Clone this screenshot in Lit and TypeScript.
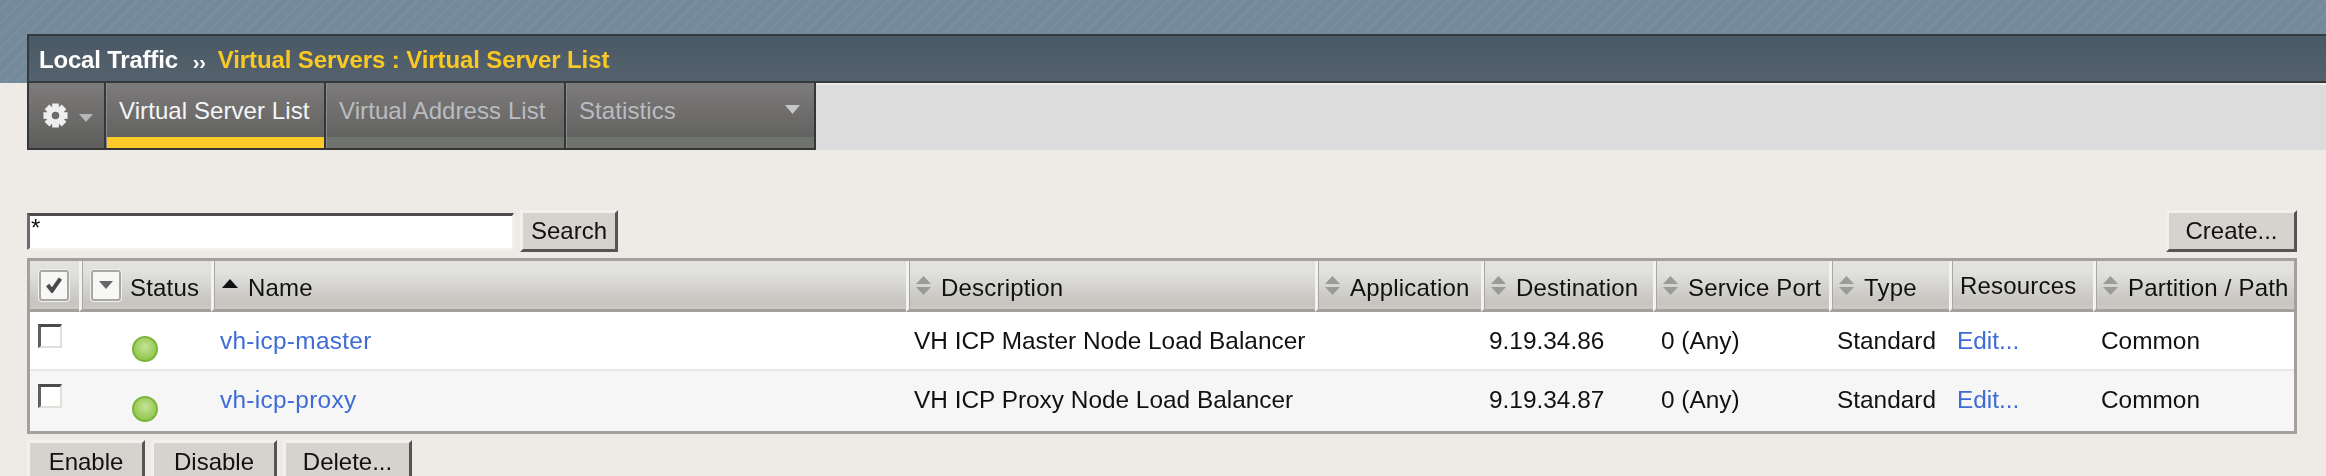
import { LitElement, html, css, svg } from "lit";
import { customElement } from "lit/decorators.js";

const sortBoth = svg`<svg class="sort" width="17" height="19" viewBox="0 0 17 19"><path d="M8.5 0 L16 8 H1 Z M1 11 H16 L8.5 19 Z" fill="#9a9a98"/></svg>`;
const sortUp = svg`<svg class="sort up" width="16" height="9" viewBox="0 0 16 9"><path d="M8 0 L16 9 H0 Z" fill="#111"/></svg>`;

const gearPath = (() => {
  let d = "";
  const cx = 12.5, cy = 12.5, n = 8;
  for (let i = 0; i < n; i++) {
    const a = (i * 2 * Math.PI) / n;
    const w = 0.27;
    const p = (r: number, t: number) => `${(cx + r * Math.cos(t)).toFixed(2)} ${(cy + r * Math.sin(t)).toFixed(2)}`;
    d += `${i === 0 ? "M" : "L"}${p(8.6, a - w * 1.5)} L${p(12.5, a - w)} L${p(12.5, a + w)} L${p(8.6, a + w * 1.5)} `;
  }
  return d + "Z";
})();

type Row = { name: string; desc: string; dest: string };
const rows: Row[] = [
  { name: "vh-icp-master", desc: "VH ICP Master Node Load Balancer", dest: "9.19.34.86" },
  { name: "vh-icp-proxy", desc: "VH ICP Proxy Node Load Balancer", dest: "9.19.34.87" },
];

@customElement("app-root")
export class AppRoot extends LitElement {
  static styles = css`
    :host {
      display: block;
      width: 2326px;
      height: 476px;
      overflow: hidden;
      background: #eeebe6;
      font-family: "Liberation Sans", Arial, sans-serif;
      font-size: 24px;
      color: #111;
    }
    .page { filter: blur(0.45px); }
    .hatch {
      height: 83px;
      padding: 34px 0 0 27px;
      box-sizing: border-box;
      background: repeating-linear-gradient(135deg, #74899a 0 6px, #798d9e 6px 9px);
    }
    .crumb {
      height: 49px;
      box-sizing: border-box;
      border-top: 2px solid #333a40;
      border-left: 2px solid #333a40;
      border-bottom: 2px solid #333a40;
      background: linear-gradient(#4a5966, #55626d);
      display: flex;
      align-items: center;
      padding: 2px 0 0 10px;
      font-weight: bold;
      letter-spacing: -0.2px;
      color: #fff;
    }
    .sep { margin: 5px 12px 0 15px; font-size: 20px; }
    .crumb .cur { color: #f9c825; letter-spacing: -0.1px; }
    .navrow { display: flex; height: 67px; padding-left: 27px; }
    .nav {
      display: flex;
      width: 789px;
      height: 67px;
      box-sizing: border-box;
      border: 2px solid #33373a;
      border-top: 0;
      background: #33373a;
      gap: 2px;
    }
    .band { flex: 1; background: #dcdcdc; margin-top: 2px; }
    .tab {
      position: relative;
      box-sizing: border-box;
      background: linear-gradient(#7d7b7b, #5d5e5b);
      color: #b9bcc0;
      padding: 13px 0 0 12px;
      height: 65px;
      border-left: 1px solid #8b8b8b;
      line-height: 30px;
      letter-spacing: 0.08px;
    }
    .tab::after {
      content: "";
      position: absolute;
      left: 0;
      right: 0;
      bottom: 0;
      height: 11px;
      background: #70726d;
    }
    .tab.active { color: #f4f6f8; }
    .tab.active::after { background: #fccb2a; }
    .tab.gear {
      width: 75px;
      padding: 20px 0 0 14px;
      border-left: 0;
      display: flex;
      gap: 11px;
    }
    .tab.gear::after { display: none; }
    .tab.gear .car { margin-top: 11px; }
    .t1 { width: 218px; }
    .t2 { width: 238px; }
    .t3 { flex: 1; display: flex; justify-content: space-between; padding-right: 14px; }
    .t3 svg { margin-top: 9px; }
    .body { padding: 60px 29px 0 27px; }
    .search { display: flex; align-items: flex-start; height: 42px; margin-bottom: 6px; }
    .input {
      width: 487px;
      height: 37px;
      margin-top: 3px;
      box-sizing: border-box;
      border: 2px solid #f3f1ed;
      border-top: 3px solid #4c4c4c;
      border-left: 3px solid #6a6a6a;
      background: #fff;
      line-height: 24px;
      padding-left: 1px;
    }
    .btn {
      box-sizing: border-box;
      height: 42px;
      background: #d6d3ce;
      border: 3px solid #f2f0ec;
      border-right-color: #555;
      border-bottom-color: #555;
      display: flex;
      align-items: center;
      justify-content: center;
      color: #111;
    }
    .b-search { width: 98px; margin-left: 6px; }
    .b-create { width: 131px; margin-left: auto; }
    .table {
      display: grid;
      grid-template-columns: 49px 132px 695px 409px 166px 172px 176px 120px 144px 201px;
      grid-template-rows: 51px 59px 60px;
      border: 3px solid #a3a19e;
      box-sizing: border-box;
      background: #fff;
    }
    .th {
      box-sizing: border-box;
      border-left: 3px solid #f2f2f0;
      box-shadow: inset 1px 0 0 #a9a7a3;
      border-bottom: 3px solid #a3a19e;
      background: linear-gradient(#e2e2e0 0, #e0e0de 25%, #c8c5c1 85%, #cdcac5);
      display: flex;
      align-items: center;
      padding: 5px 0 0 6px;
      white-space: nowrap;
      letter-spacing: 0.2px;
    }
    .th:first-child { border-left: 0; box-shadow: none; padding-left: 9px; }
    .sort { margin-right: 9px; flex: none; margin-top: -5px; }
    .sort.up { margin-right: 10px; margin-top: -9px; margin-left: 2px; }
    .th.res { padding-bottom: 3px; padding-left: 8px; }
    .box {
      width: 30px;
      height: 31px;
      margin-top: -5px;
      box-sizing: border-box;
      border: 2px solid #a8a8a6;
      border-radius: 3px;
      background: #f7f7f6;
      box-shadow: 0 0 0 1px #f0f0ee;
      display: flex;
      align-items: center;
      justify-content: center;
      flex: none;
    }
    .th.status { padding-left: 9px; }
    .box.dd { margin-right: 9px; }
    .td {
      display: flex;
      align-items: center;
      padding-left: 8px;
      white-space: nowrap;
      background: #fff;
      box-sizing: border-box;
      border-bottom: 2px solid #e8e8e6;
      font-size: 24.4px;
    }
    .alt .td { background: #f6f6f6; border-bottom: 0; padding-bottom: 2px; }
    .row { display: contents; }
    .cb {
      width: 24px;
      height: 24px;
      box-sizing: border-box;
      border: 2px solid #e2dfda;
      border-top: 3px solid #4b4b4b;
      border-left: 3px solid #5f5f5f;
      background: #fff;
    }
    .td.cbc { align-items: flex-start; padding: 12px 0 0 8px; }
    .alt .td.cbc { padding-top: 13px; }
    .dot {
      width: 26px;
      height: 26px;
      border-radius: 50%;
      box-sizing: border-box;
      border: 2px solid #7ab53a;
      background: radial-gradient(circle at 50% 40%, #c6e39a 0, #a6d268 45%, #84bd3d 100%);
      margin: 24px 0 0 53px;
    }
    .alt .dot { margin-top: 25px; }
    .td.dotc { padding-left: 0; align-items: flex-start; }
    a { color: #3e6bd6; text-decoration: none; }
    .td.name { padding-left: 9px; letter-spacing: 0.3px; }
    .actions { display: flex; gap: 6px; margin-top: 6px; }
    .b-en { width: 118px; }
    .b-dis { width: 126px; }
    .b-del { width: 129px; }
    .actions .btn { height: 50px; padding-bottom: 9px; border-bottom: 0; }
  `;

  private head(label: string, sort = true) {
    return html`<div class="th">${sort ? sortBoth : ""}<span>${label}</span></div>`;
  }

  render() {
    return html`
      <div class="page">
        <div class="hatch">
          <div class="crumb">
            <span>Local Traffic</span><span class="sep">››</span>
            <span class="cur">Virtual Servers : Virtual Server List</span>
          </div>
        </div>
        <div class="navrow">
          <div class="nav">
            <div class="tab gear">
              <svg width="25" height="25" viewBox="0 0 25 25">
                <path d=${gearPath} fill="#efefef" />
                <circle cx="12.5" cy="12.5" r="3.8" fill="#6c6c6a" />
              </svg>
              <svg class="car" width="14" height="8" viewBox="0 0 14 8"><path d="M0 0 H14 L7 8 Z" fill="#b5b6b5" /></svg>
            </div>
            <div class="tab t1 active">Virtual Server List</div>
            <div class="tab t2">Virtual Address List</div>
            <div class="tab t3">
              <span>Statistics</span>
              <svg width="15" height="9" viewBox="0 0 15 9"><path d="M0 0 H15 L7.5 9 Z" fill="#c4c6c8" /></svg>
            </div>
          </div>
          <div class="band"></div>
        </div>
        <div class="body">
          <div class="search">
            <div class="input">*</div>
            <div class="btn b-search">Search</div>
            <div class="btn b-create">Create...</div>
          </div>
          <div class="table">
            <div class="th">
              <div class="box">
                <svg width="18" height="16" viewBox="0 0 22 20"><path d="M3 10 L8.5 17 L19 2" fill="none" stroke="#4a4a4a" stroke-width="5" /></svg>
              </div>
            </div>
            <div class="th status">
              <div class="box dd">
                <svg width="14" height="8" viewBox="0 0 14 8"><path d="M0 0 H14 L7 8 Z" fill="#666" /></svg>
              </div>
              <span>Status</span>
            </div>
            <div class="th">${sortUp}<span>Name</span></div>
            ${this.head("Description")} ${this.head("Application")} ${this.head("Destination")}
            ${this.head("Service Port")} ${this.head("Type")}
            <div class="th res"><span>Resources</span></div>
            ${this.head("Partition / Path")}
            ${rows.map(
              (r, i) => html`
                <div class="row ${i === 1 ? "alt" : ""}">
                  <div class="td cbc"><div class="cb"></div></div>
                  <div class="td dotc"><div class="dot"></div></div>
                  <div class="td name"><a>${r.name}</a></div>
                  <div class="td">${r.desc}</div>
                  <div class="td"></div>
                  <div class="td">${r.dest}</div>
                  <div class="td">0 (Any)</div>
                  <div class="td">Standard</div>
                  <div class="td"><a>Edit...</a></div>
                  <div class="td">Common</div>
                </div>
              `,
            )}
          </div>
          <div class="actions">
            <div class="btn b-en">Enable</div>
            <div class="btn b-dis">Disable</div>
            <div class="btn b-del">Delete...</div>
          </div>
        </div>
      </div>
    `;
  }
}
